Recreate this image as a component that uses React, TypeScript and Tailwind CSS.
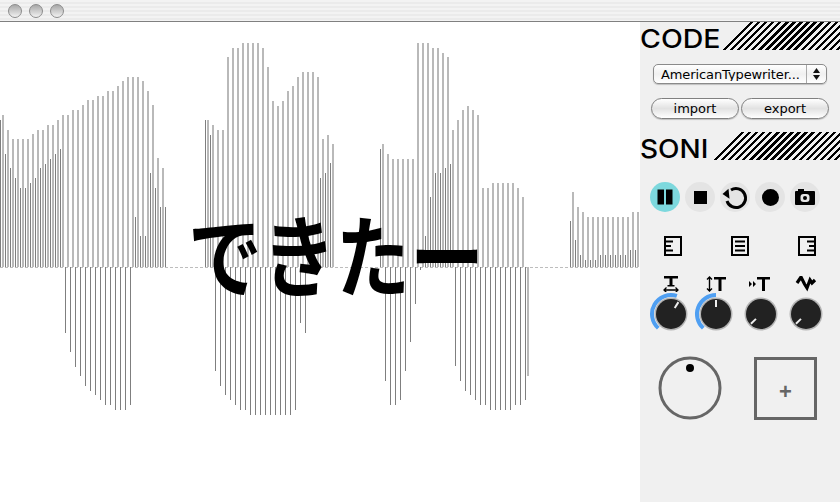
const lightBars: [number, number[]][] = [
  [2, [115, 130, 139, 139, 139, 139, 134, 130, 130, 125, 125, 120, 115, 115, 110, 110, 105, 100, 100, 96, 96, 91, 91, 86, 81, 77, 77, 77, 81, 91, 105, 158, 168]],
  [207, [120, 125, 130, 130, 57, 48, 48, 43, 43, 43, 43, 48, 67, 101, 106, 101, 91, 86, 77, 72, 72, 72, 77, 139, 135, 144]],
  [382, [144, 154, 159, 159, 159, 159, 159, 43, 43, 43, 48, 48, 53, 57, 130, 120, 110, 106, 110, 115, 188, 188, 183, 183, 183, 183, 183, 188, 197]],
  [572, [192, 207, 212, 217, 217, 217, 217, 217, 217, 217, 217, 217, 212, 212]],
];

const darkBars: [number, number[]][] = [
  [0, [120, 154, 168, 178, 188, 188, 183, 178, 168, 164, 159, 154, 149]],
  [135, [217, 236, 236, 173, 188, 207, 207]],
  [205, [120, 135]],
  [320, [178, 173, 163]],
  [380, [149]],
  [425, [236, 197, 173, 173, 168, 164]],
  [570, [221, 240, 255, 260, 260, 260, 255, 255, 255, 255, 255, 255, 250, 250]],
];

const lowerBars: [number, number[]][] = [
  [65, [333, 352, 367, 376, 386, 391, 395, 400, 405, 405, 410, 410, 410, 405]],
  [215, [371, 386, 395, 400, 405, 410, 410, 415, 415, 415, 415, 415, 415, 415, 415, 415, 410, 323, 333]],
  [385, [381, 405, 405, 400, 371, 342, 304, 270]],
  [455, [366, 381, 391, 395, 400, 405, 405, 410, 410, 410, 410, 410, 405, 405, 400]],
];

const BASE = 267;

function Waveform() {
  return (
    <svg width="640" height="480" viewBox="0 22 640 480" shapeRendering="crispEdges" className="block">
      <line x1="0" y1={BASE + 0.5} x2="640" y2={BASE + 0.5} stroke="#bdbdbd" strokeDasharray="3 2" />
      {lightBars.map(([start, tops]) =>
        tops.map((top, i) => (
          <rect key={`l${start}-${i}`} x={start + i * 5} y={top} width="2" height={BASE - top} fill="#b9b9b9" />
        ))
      )}
      {darkBars.map(([start, tops]) =>
        tops.map((top, i) => (
          <rect key={`d${start}-${i}`} x={start + i * 5} y={top} width="1" height={BASE - top} fill="#7f7f7f" />
        ))
      )}
      {lowerBars.map(([start, ends]) =>
        ends.map((end, i) => (
          <rect key={`u${start}-${i}`} x={start + i * 5} y={BASE} width="1" height={end - BASE} fill="#7f7f7f" />
        ))
      )}
      <rect x="527" y={BASE} width="2" height="109" fill="#b9b9b9" />
    </svg>
  );
}

function polar(r: number, deg: number) {
  const a = ((deg - 90) * Math.PI) / 180;
  return `${22 + r * Math.cos(a)} ${22 + r * Math.sin(a)}`;
}

function Knob({ from, to, tick }: { from?: number; to?: number; tick: number }) {
  const hasArc = from !== undefined && to !== undefined;
  const sin = Math.sin((tick * Math.PI) / 180);
  const cos = Math.cos((tick * Math.PI) / 180);
  return (
    <svg width="44" height="44" viewBox="0 0 44 44" className="block">
      {hasArc && (
        <path
          d={`M${polar(19, from)} A19 19 0 ${to - from > 180 ? 1 : 0} 1 ${polar(19, to)}`}
          fill="none"
          stroke="#4f9ff2"
          strokeWidth="4"
        />
      )}
      <circle cx="22" cy="22" r="16.500" fill="#b4b4b4" />
      <circle cx="22" cy="22" r="15" fill="#222" />
      <line x1={22 + 7 * sin} y1={22 - 7 * cos} x2={22 + 14 * sin} y2={22 - 14 * cos} stroke="#eee" strokeWidth="2" />
    </svg>
  );
}

function AlignIcon({ lines }: { lines: [number, number][] }) {
  return (
    <svg width="18" height="20" viewBox="0 0 18 20" className="block">
      <rect x="1" y="1" width="16" height="18" fill="none" stroke="#000" strokeWidth="2" />
      {lines.map(([a, b], i) => (
        <line key={i} x1={a} x2={b} y1={5.500 + i * 4.500} y2={5.500 + i * 4.500} stroke="#000" strokeWidth="2" />
      ))}
    </svg>
  );
}

function Header({ label, width, stretch }: { label: string; width: string; stretch: string }) {
  return (
    <div className="flex h-[28px] items-end">
      <div className={`${width} h-[22px] shrink-0 font-['Inter',sans-serif] text-[25px] leading-[22px] font-medium text-black`}>
        <span className={`inline-block origin-left ${stretch}`}>{label}</span>
      </div>
      <div className="-ml-[2px] h-[28px] flex-1 bg-[repeating-linear-gradient(135deg,#000_0,#000_2.4px,transparent_2.4px,transparent_5px)] [clip-path:polygon(28px_0,100%_0,100%_100%,0_100%)]" />
    </div>
  );
}

function RoundButton({ active, children }: { active?: boolean; children: React.ReactNode }) {
  return (
    <div className={`flex h-[30px] w-[30px] items-center justify-center rounded-full ${active ? "bg-[#7dd8dd]" : "bg-[#e4e4e4]"}`}>
      {children}
    </div>
  );
}

function PillButton({ label }: { label: string }) {
  return (
    <div className="flex h-[21px] w-[88px] items-center justify-center rounded-full border border-[#808080] bg-gradient-to-b from-white via-[#e2e2e2] to-white text-[13px] leading-none text-black shadow-[0_1px_1px_rgba(0,0,0,0.2)]">
      {label}
    </div>
  );
}

function Sidebar() {
  return (
    <div className="h-[480px] w-[200px] shrink-0 bg-[#f0f0f0]">
      <Header label="CODE" width="w-[84px]" stretch="scale-x-[1.14]" />

      <div className="mt-[14px] ml-[13px] flex h-[20px] w-[174px] items-center rounded-[5px] border border-[#8a8a8a] bg-gradient-to-b from-white via-[#f0f0f0] to-white shadow-[0_1px_1px_rgba(0,0,0,0.2)]">
        <div className="flex-1 overflow-hidden pl-[7px] text-[13px] leading-none tracking-[-0.1px] whitespace-nowrap text-black">AmericanTypewriter...</div>
        <div className="flex h-full w-[20px] flex-col items-center justify-center gap-[2px] border-l border-[#aaa]">
          <svg width="7" height="5" viewBox="0 0 7 5"><path d="M3.500 0 7 5H0z" fill="#111" /></svg>
          <svg width="7" height="5" viewBox="0 0 7 5"><path d="M0 0h7L3.500 5z" fill="#111" /></svg>
        </div>
      </div>

      <div className="mt-[14px] flex gap-[2px] pl-[11px]">
        <PillButton label="import" />
        <PillButton label="export" />
      </div>

      <div className="mt-[13px]">
        <Header label="SONI" width="w-[75px]" stretch="scale-x-[1.12]" />
      </div>

      <div className="mt-[22px] flex gap-[5px] pl-[10px]">
        <RoundButton active>
          <svg width="16" height="16" viewBox="0 0 16 16"><path d="M.500 .500h6.500v15H.500zM9 .500h6.500v15H9z" fill="#000" /></svg>
        </RoundButton>
        <RoundButton>
          <div className="h-[13px] w-[13px] bg-black" />
        </RoundButton>
        <RoundButton>
          <svg width="30" height="30" viewBox="0 0 30 30">
            <path d="M11 8A9.500 9.500 0 1 1 7 19" fill="none" stroke="#000" strokeWidth="3" />
            <path d="M2.500 12 8.500 6.800 9.500 16.800z" fill="#000" />
          </svg>
        </RoundButton>
        <RoundButton>
          <div className="h-[17px] w-[17px] rounded-full bg-black" />
        </RoundButton>
        <RoundButton>
          <svg width="20" height="16" viewBox="0 0 20 16">
            <path d="M1 2h2V0h6v2h10a1 1 0 0 1 1 1v12a1 1 0 0 1-1 1H1a1 1 0 0 1-1-1V3a1 1 0 0 1 1-1z" fill="#000" />
            <rect x="5.500" y="5" width="9" height="8" rx="3" fill="#e4e4e4" />
            <circle cx="10" cy="9" r="2" fill="#000" />
          </svg>
        </RoundButton>
      </div>

      <div className="mt-[24px] flex gap-[49px] pl-[24px]">
        <AlignIcon lines={[[2, 9], [2, 7], [2, 9]]} />
        <AlignIcon lines={[[4, 14], [4, 14], [4, 14]]} />
        <AlignIcon lines={[[9, 16], [11, 16], [9, 16]]} />
      </div>

      <div className="mt-[20px] grid w-[190px] grid-cols-[45px_45px_45px_45px] pl-[8px]">
        <div className="flex flex-col items-center">
          <svg width="30" height="16" viewBox="0 0 30 16" className="block">
            <path d="M8 0h14v2.500h-5.500V9h2v1.500h-7V9h2V2.500H8z" fill="#000" />
            <path d="M8 14h14M10.500 11.500 8 14l2.500 2.500M19.500 11.500 22 14l-2.500 2.500" fill="none" stroke="#000" strokeWidth="1.300" />
          </svg>
          <Knob from={222} to={378} tick={32} />
        </div>
        <div className="flex flex-col items-center">
          <svg width="30" height="16" viewBox="0 0 30 16" className="block">
            <path d="M8.500 1v14M6 3.500 8.500 1 11 3.500M6 12.500 8.500 15 11 12.500" fill="none" stroke="#000" strokeWidth="1.400" />
            <path d="M13 1h12v2.500h-4.500V15h-3V3.500H13z" fill="#000" />
          </svg>
          <Knob from={222} to={360} tick={0} />
        </div>
        <div className="flex flex-col items-center">
          <svg width="30" height="16" viewBox="0 0 30 16" className="block">
            <path d="M3 5v6l3-3zM7 5v6l3-3z" fill="#000" />
            <path d="M11 1h13v2.500h-5V15h-3V3.500h-5z" fill="#000" />
          </svg>
          <Knob tick={226} />
        </div>
        <div className="flex flex-col items-center">
          <svg width="30" height="16" viewBox="0 0 30 16" className="block">
            <path d="M6 7 10 1l3.500 7 2.500 4 3-8 2 3 3-3" fill="none" stroke="#000" strokeWidth="3.200" />
          </svg>
          <Knob tick={226} />
        </div>
      </div>

      <div className="mt-[19px] flex items-center gap-[31px] pl-[17px]">
        <svg width="66" height="66" viewBox="0 0 66 66" className="block">
          <circle cx="33" cy="33" r="30" fill="none" stroke="#666" strokeWidth="3" />
          <circle cx="33" cy="13" r="4" fill="#000" />
        </svg>
        <div className="flex h-[63px] w-[63px] items-center justify-center border-[3px] border-[#666] pt-[7px] font-['Liberation_Sans',sans-serif] text-[22px] leading-none font-bold text-[#666]">
          +
        </div>
      </div>
    </div>
  );
}

export default function App() {
  return (
    <div className="h-[502px] w-[840px] overflow-hidden bg-white font-['DejaVu_Sans',sans-serif]">
      <div className="flex h-[22px] items-center gap-[7px] border-b border-[#808080] bg-[repeating-linear-gradient(180deg,#f3f3f3_0,#f3f3f3_2px,#ebebeb_2px,#ebebeb_4px)] pl-[8px]">
        <div className="h-[14px] w-[14px] rounded-full border border-[#8c8c8c] bg-gradient-to-b from-[#a8a8a8] to-[#f2f2f2]" />
        <div className="h-[14px] w-[14px] rounded-full border border-[#8c8c8c] bg-gradient-to-b from-[#a8a8a8] to-[#f2f2f2]" />
        <div className="h-[14px] w-[14px] rounded-full border border-[#8c8c8c] bg-gradient-to-b from-[#a8a8a8] to-[#f2f2f2]" />
      </div>
      <div className="flex">
        <div className="relative h-[480px] w-[640px] shrink-0">
          <Waveform />
          <div className="absolute top-[180px] left-[188px] scale-y-[1.2] font-['Noto_Sans_CJK_JP',sans-serif] text-[74px] leading-[100px] font-bold whitespace-nowrap text-black">
            できたー
          </div>
        </div>
        <Sidebar />
      </div>
    </div>
  );
}
